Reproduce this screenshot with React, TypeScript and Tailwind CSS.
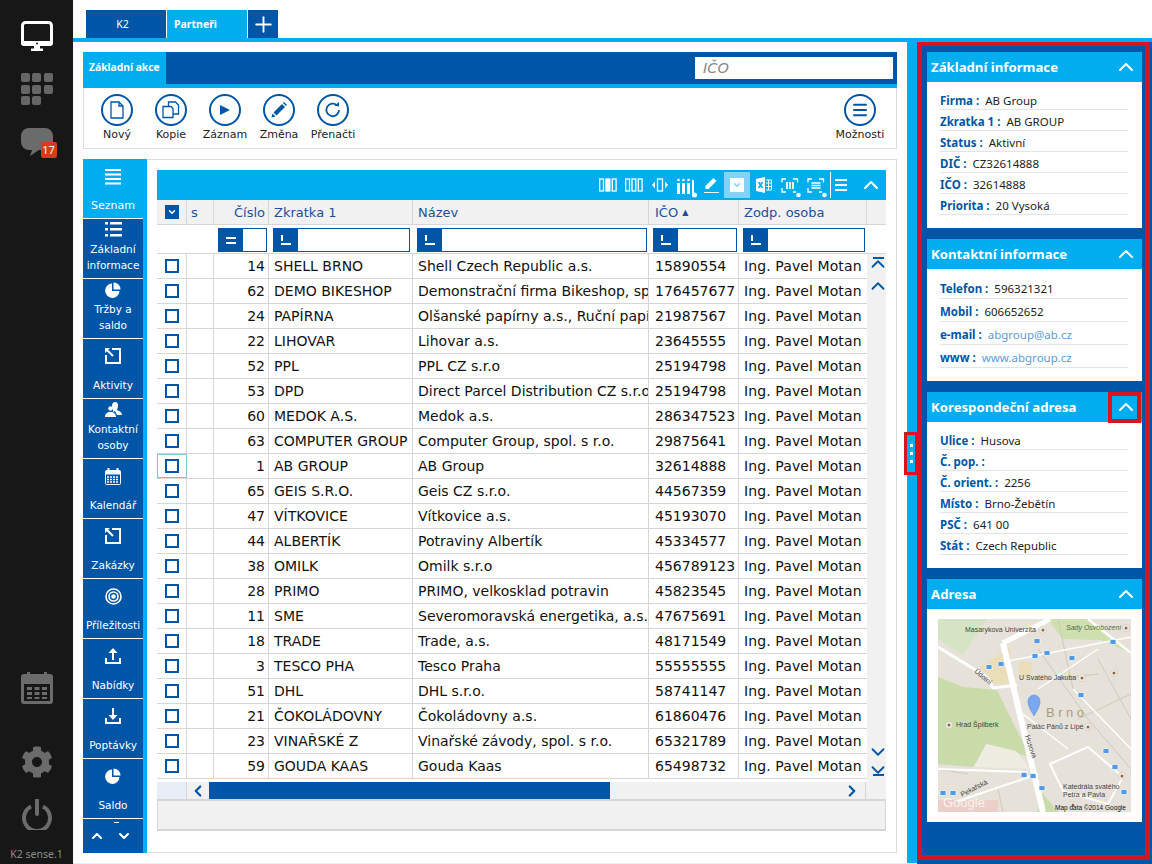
// K2 sense partner list with the detail panel on the right
import React from 'react';
import { Plus, ChevronUp, ChevronDown, ChevronLeft, ChevronRight, Menu } from 'lucide-react';
import { FaCog } from 'react-icons/fa';

const rows = [
  ['14', 'SHELL BRNO', 'Shell Czech Republic a.s.', '15890554'],
  ['62', 'DEMO BIKESHOP', 'Demonstrační firma Bikeshop, spol. s r.o.', '176457677'],
  ['24', 'PAPÍRNA', 'Olšanské papírny a.s., Ruční papírna', '21987567'],
  ['22', 'LIHOVAR', 'Lihovar a.s.', '23645555'],
  ['52', 'PPL', 'PPL CZ s.r.o', '25194798'],
  ['53', 'DPD', 'Direct Parcel Distribution CZ s.r.o.', '25194798'],
  ['60', 'MEDOK A.S.', 'Medok a.s.', '286347523'],
  ['63', 'COMPUTER GROUP', 'Computer Group, spol. s r.o.', '29875641'],
  ['1', 'AB GROUP', 'AB Group', '32614888'],
  ['65', 'GEIS S.R.O.', 'Geis CZ s.r.o.', '44567359'],
  ['47', 'VÍTKOVICE', 'Vítkovice a.s.', '45193070'],
  ['44', 'ALBERTÍK', 'Potraviny Albertík', '45334577'],
  ['38', 'OMILK', 'Omilk s.r.o', '456789123'],
  ['28', 'PRIMO', 'PRIMO, velkosklad potravin', '45823545'],
  ['11', 'SME', 'Severomoravská energetika, a.s.', '47675691'],
  ['18', 'TRADE', 'Trade, a.s.', '48171549'],
  ['3', 'TESCO PHA', 'Tesco Praha', '55555555'],
  ['51', 'DHL', 'DHL s.r.o.', '58741147'],
  ['21', 'ČOKOLÁDOVNY', 'Čokoládovny a.s.', '61860476'],
  ['23', 'VINAŘSKÉ Z', 'Vinařské závody, spol. s r.o.', '65321789'],
  ['59', 'GOUDA KAAS', 'Gouda Kaas', '65498732'],
];

const PieIcon = () => (
  <svg width="16" height="16" viewBox="0 0 16 16" fill="white">
    <path d="M7 1.500v7.500h7.500a7.200 7.200 0 1 1-7.500-7.500z" />
    <path d="M8.500 0.500a7 7 0 0 1 7 7h-7z" />
  </svg>
);

const ExitIcon = () => (
  <svg width="16" height="16" viewBox="0 0 16 16" fill="none" stroke="white" strokeWidth="2">
    <path d="M1 7V15H15V1H7" />
    <path d="M2 2l6 6" />
    <path d="M0 0h5L0 5z" fill="white" stroke="none" />
  </svg>
);

const ListIcon = () => (
  <svg width="17" height="15" viewBox="0 0 17 15" fill="white">
    <rect x="0" y="0" width="3" height="2.500" /><rect x="5" y="0" width="12" height="2.500" />
    <rect x="0" y="6" width="3" height="2.500" /><rect x="5" y="6" width="12" height="2.500" />
    <rect x="0" y="12" width="3" height="2.500" /><rect x="5" y="12" width="12" height="2.500" />
  </svg>
);

const LinesIcon = () => (
  <svg width="16" height="16" viewBox="0 0 16 16" fill="white">
    <rect y="0" width="16" height="2" /><rect y="4.500" width="16" height="2" />
    <rect y="9" width="16" height="2" /><rect y="13.500" width="16" height="2" />
  </svg>
);

const PeopleIcon = () => (
  <svg width="17" height="15" viewBox="0 0 17 15" fill="white">
    <path d="M10 0c2 0 3 1.500 3 3.500S12 7 12 8c2 1 5 2 5 5h-5l-2-4-2 1c0-2 0-2-.5-3S7 5 7 3.500 8 0 10 0z" />
    <circle cx="5.500" cy="6.500" r="2.200" />
    <path d="M0 15c0-3 2-5 5.500-5s5.500 2 5.500 5z" />
  </svg>
);

const CalendarSmall = () => (
  <svg width="16" height="17" viewBox="0 0 16 17" fill="none" stroke="white">
    <rect x="0.500" y="2.500" width="15" height="14" rx="1" />
    <path d="M3.500 0v3M12.500 0v3" strokeWidth="2" />
    <path d="M1 3h14v3H1z" fill="white" />
    <path d="M2 9h12M2 11.500h12M2 14h12" strokeWidth="1.500" strokeDasharray="2 1" />
  </svg>
);

const TargetIcon = () => (
  <svg width="17" height="17" viewBox="0 0 17 17" fill="none" stroke="white" strokeWidth="1.600">
    <circle cx="8.500" cy="8.500" r="7.500" />
    <circle cx="8.500" cy="8.500" r="4.500" />
    <circle cx="8.500" cy="8.500" r="1.500" fill="white" />
  </svg>
);

const UploadIcon = () => (
  <svg width="16" height="16" viewBox="0 0 16 16" fill="none" stroke="white" strokeWidth="2">
    <path d="M1 10v5h14v-5" />
    <path d="M8 12V3" />
    <path d="M3.500 5L8 0l4.500 5z" fill="white" stroke="none" />
  </svg>
);

const DownloadIcon = () => (
  <svg width="16" height="16" viewBox="0 0 16 16" fill="none" stroke="white" strokeWidth="2">
    <path d="M1 10v5h14v-5" />
    <path d="M8 0v8" />
    <path d="M3.500 7L8 12l4.500-5z" fill="white" stroke="none" />
  </svg>
);

const navItems: { label: React.ReactNode; icon: React.ReactNode; two?: boolean }[] = [
  { label: <>Základní<br />informace</>, icon: <ListIcon />, two: true },
  { label: <>Tržby a<br />saldo</>, icon: <PieIcon />, two: true },
  { label: 'Aktivity', icon: <ExitIcon /> },
  { label: <>Kontaktní<br />osoby</>, icon: <PeopleIcon />, two: true },
  { label: 'Kalendář', icon: <CalendarSmall /> },
  { label: 'Zakázky', icon: <ExitIcon /> },
  { label: 'Příležitosti', icon: <TargetIcon /> },
  { label: 'Nabídky', icon: <UploadIcon /> },
  { label: 'Poptávky', icon: <DownloadIcon /> },
  { label: 'Saldo', icon: <PieIcon /> },
];

const actionIcons = {
  file: (
    <svg width="14" height="18" viewBox="0 0 14 18" fill="none" stroke="#0056a6" strokeWidth="1.300">
      <path d="M1 1h8l4 4v12H1z" />
      <path d="M9 1v4h4" />
    </svg>
  ),
  copy: (
    <svg width="18" height="18" viewBox="0 0 18 18" fill="#fff" stroke="#0056a6" strokeWidth="1.300">
      <path d="M6.500 1h7l3 3v9h-10z" />
      <path d="M1 5.500h8l2 2v9H1z" />
    </svg>
  ),
  play: (
    <svg width="12" height="12" viewBox="0 0 12 12" fill="#0056a6">
      <path d="M1 1l10 5-10 5z" />
    </svg>
  ),
  pencil: (
    <svg width="16" height="16" viewBox="0 0 16 16" fill="#0056a6">
      <path d="M11 2l3 3-8.500 8.500-3-3z" />
      <path d="M12 1l1-1 3 3-1 1z" />
      <path d="M1.500 11.500l3 3-4 1z" />
    </svg>
  ),
  refresh: (
    <svg width="18" height="18" viewBox="0 0 18 18" fill="none" stroke="#0056a6" strokeWidth="1.800">
      <path d="M15 9a6.300 6.300 0 1 1-2-4.700" />
      <path d="M10.500 4.800L15 5.500V1z" fill="#0056a6" stroke="none" />
    </svg>
  ),
};

const actions = [
  { label: 'Nový', icon: actionIcons.file },
  { label: 'Kopie', icon: actionIcons.copy },
  { label: 'Záznam', icon: actionIcons.play },
  { label: 'Změna', icon: actionIcons.pencil },
  { label: 'Přenačti', icon: actionIcons.refresh },
];

const ColumnBars = ({ solid }: { solid: number[] }) => (
  <svg width="18" height="14" viewBox="0 0 18 14" fill="none" stroke="white" strokeWidth="1.300" className="shrink-0">
    {[0.700, 7, 13.300].map((x, i) => (
      <rect key={x} x={x} y="1" width="3.800" height="12" fill={solid.includes(i) ? 'white' : 'none'} />
    ))}
  </svg>
);

const MoveColumn = () => (
  <svg width="16" height="14" viewBox="0 0 16 14" fill="white" className="shrink-0">
    <path d="M0 7l3-3.500v7z" />
    <path d="M16 7l-3-3.500v7z" />
    <rect x="5.500" y="1" width="5" height="12" fill="none" stroke="white" strokeWidth="1.300" />
  </svg>
);

const ColumnsDots = () => (
  <svg width="21" height="20" viewBox="0 0 21 20" fill="white" className="shrink-0">
    <circle cx="1.500" cy="2" r="1.300" /><rect x="0" y="5" width="3" height="11" />
    <circle cx="6.500" cy="2" r="1.300" /><rect x="5" y="5" width="3" height="11" />
    <circle cx="11.500" cy="2" r="1.300" /><rect x="10" y="5" width="3" height="11" />
    <rect x="15" y="2" width="2" height="14" />
    <circle cx="17.500" cy="17" r="2.500" />
  </svg>
);

const PencilLine = () => (
  <svg width="16" height="16" viewBox="0 0 16 16" fill="white" className="shrink-0">
    <path d="M10.500 1l3 3-8 8H2.500V9z" />
    <path d="M1 15h15v1.500H1z" />
  </svg>
);

const ExcelIcon = () => (
  <svg width="16" height="16" viewBox="0 0 16 16" fill="none" className="shrink-0">
    <path d="M0 2l9-2v16l-9-2z" fill="white" />
    <path d="M2.500 5l4 6M6.500 5l-4 6" stroke="#00aeef" strokeWidth="1.500" />
    <path d="M10 3h5.500v10H10M10 6h5M10 9.500h5M12.500 3v10" stroke="white" />
  </svg>
);

const FrameDot = ({ dashed }: { dashed?: boolean }) => (
  <svg width="20" height="20" viewBox="0 0 20 20" fill="none" stroke="white" strokeWidth="1.300" className="shrink-0">
    <path d="M1 4.500V1h4M12 1h4.500v3.500M1 10v4h4M12 14h3" />
    {dashed ? (
      <path d="M4.500 5h9M4.500 7.500h9M4.500 10h9" strokeWidth="1.700" />
    ) : (
      <path d="M6 4v7M9 4v7M12 4v7" strokeWidth="1.800" />
    )}
    <circle cx="17.500" cy="17" r="2.300" fill="white" stroke="none" />
  </svg>
);

const FilterInput = ({ w, eq }: { w: string; eq?: boolean }) => (
  <div className={`${w} h-[24px] border border-[#0056a6] bg-white flex`}>
    <div className="w-[24px] h-full bg-[#0056a6] flex items-center justify-center">
      {eq ? (
        <div className="w-[10px] h-[7px] border-y-2 border-white" />
      ) : (
        <div className="w-[10px] h-[10px] border-b-2 border-white relative">
          <div className="absolute left-0 top-0 w-[2px] h-[6px] bg-white" />
        </div>
      )}
    </div>
  </div>
);

const Card = ({ title, boxed, children }: { title: string; boxed?: boolean; children: React.ReactNode }) => (
  <div className="bg-white shrink-0">
    <div className="h-[30px] bg-[#00aeef] flex items-center justify-between text-white relative">
      <span className="pl-[4px] pt-[1px] text-[13.200px] font-bold" style={{ fontFamily: "'Noto Sans', sans-serif" }}>{title}</span>
      <div className="w-[30px] h-[30px] mr-[1px] flex items-center justify-center">
        <ChevronUp size={24} strokeWidth={2} />
      </div>
      {boxed && <div className="absolute right-[1px] top-0 w-[33px] h-[31px] border-[4px] border-[#d9141e]" />}
    </div>
    {children}
  </div>
);

const Info = ({ k, v, href, tall }: { k: string; v?: string; href?: boolean; tall?: boolean }) => (
  <div
    className={`${tall ? 'h-[23px]' : 'h-[21px]'} ml-[13px] mr-[14px] pt-[3px] border-b border-[#e4e4e4] flex items-center text-[11.500px] leading-none gap-[6px] whitespace-nowrap`}
    style={{ fontFamily: "'Noto Sans', sans-serif" }}
  >
    <span className="font-bold text-[#0056a6]">{k} :</span>
    <span className={href ? 'text-[#5b9bd5]' : 'text-[#222]'}>{v}</span>
  </div>
);

const MapPicture = () => (
  <svg width="193" height="193" viewBox="0 0 193 193" className="block">
    <rect width="193" height="193" fill="#e6e2d9" />
    <path d="M0 58L25 68 59 71 92 138 50 125 35 148 0 145z" fill="#c8dba8" />
    <path d="M0 0H49L25 36 0 20z" fill="#d6e4c6" />
    <path d="M109 0H152L193 34 162 21 125 20z" fill="#cfe0b0" />
    <path d="M42 48L72 28 72 66 55 64z" fill="#e9deb8" />
    <path d="M80 43H94V58L82 59z" fill="#e9deb8" />
    <path d="M36 148L48 125 78 132 92 150z" fill="#efece2" />
    <path d="M0 181H60V193H0z" fill="#eccfc8" />
    <path d="M102 171L120 193H100z" fill="#c9dca9" />
    <g fill="none" stroke="#cfc9bc">
      <path d="M100 30L150 100 193 150M120 0L135 70M160 40L193 100M60 170L65 193M0 150L30 155M110 60L160 55M140 100L193 75" />
    </g>
    <g fill="none" stroke="#fff">
      <path d="M0 28L49 58 55 69 79 66" strokeWidth="3" />
      <path d="M65 24L105 193" strokeWidth="6" />
      <path d="M65 24L112 0" strokeWidth="5" />
      <path d="M70 42L193 18" strokeWidth="1.500" />
      <path d="M150 0L193 34" strokeWidth="2.500" />
      <path d="M0 150L90 153" strokeWidth="2" />
      <path d="M20 182L100 155" strokeWidth="2" />
      <path d="M112 145L150 128 185 158 170 185 125 172z" strokeWidth="2" />
      <path d="M85 95L130 130M100 70L160 30M135 70L193 130" strokeWidth="1.500" />
    </g>
    <g fill="#4f9be8" stroke="#fff" strokeWidth="0.700">
      {[[99, 22], [175, 23], [97, 37], [109, 34], [134, 39], [51, 48], [63, 45], [143, 76], [168, 132], [177, 148], [186, 173], [86, 156], [95, 157], [104, 169], [5, 174], [15, 174]].map(([x, y]) => (
        <rect key={`${x}-${y}`} x={x - 3} y={y - 2.500} width="6" height="5" rx="1" />
      ))}
    </g>
    <g fill="#f4efe3" stroke="#bbb" strokeWidth="0.500">
      {[[105, 11], [188, 9], [176, 54], [144, 59], [11, 106], [150, 108], [184, 157], [135, 186]].map(([x, y]) => (
        <g key={`${x}-${y}`}>
          <circle cx={x} cy={y} r="3.500" />
          <circle cx={x} cy={y} r="1.500" fill="#94663f" stroke="none" />
        </g>
      ))}
    </g>
    <path d="M96 97C92 90 90 87 90 82a6 6 0 0 1 12 0C102 87 100 90 96 97z" fill="#7aa7f0" stroke="#5583d0" strokeWidth="0.500" />
    <g fontFamily="'Liberation Sans', sans-serif" fontSize="7" fill="#444">
      <text x="27" y="13">Masarykova Univerzita</text>
      <text x="128" y="11" fontStyle="italic" fill="#566b48">Sady Osvobození</text>
      <text x="81" y="61">U Svatého Jakuba</text>
      <text x="18" y="108">Hrad Špilberk</text>
      <text x="89" y="110">Palác Pánů z Lipé</text>
      <text x="125" y="170">Katedrála svatého</text>
      <text x="125" y="178">Petra a Pavla</text>
      <text x="36" y="53" transform="rotate(40 36 53)">Údolní</text>
      <text x="87" y="117" transform="rotate(72 87 117)">Husova</text>
      <text x="24" y="178" transform="rotate(-27 24 178)">Pekařská</text>
      <text x="117" y="191" fontSize="6.500" fill="#111">Map data ©2014 Google</text>
    </g>
    <text x="108" y="98" fontFamily="'Liberation Sans', sans-serif" fontSize="13" letterSpacing="3.500" fill="#a99d7c">Brno</text>
    <text x="5" y="188" fontFamily="'Liberation Sans', sans-serif" fontSize="13" fill="#fff" fillOpacity="0.750">Google</text>
  </svg>
);

export default function App() {
  return (
    <div
      className="w-[1152px] h-[864px] flex overflow-hidden bg-white"
      style={{ fontFamily: "'DejaVu Sans', sans-serif" }}
    >
      {/* dark rail */}
      <div className="w-[73px] h-full bg-[#171717] flex flex-col items-center text-[#6b6b6b]">
        <svg width="32" height="30" viewBox="0 0 32 30" className="mt-[21px] shrink-0">
          <rect x="1.500" y="1.500" width="29" height="22" rx="3" fill="#171717" stroke="white" strokeWidth="3" />
          <path d="M0 20h32v2a3 3 0 0 1-3 3H3a3 3 0 0 1-3-3z" fill="white" />
          <circle cx="16" cy="22.500" r="1" fill="#171717" />
          <path d="M13 25h6v2.500h3V30H10v-2.500h3z" fill="white" />
        </svg>
        <div className="grid grid-cols-[repeat(3,9px)] gap-[2.500px] mt-[22px] w-[32px]">
          {Array.from({ length: 8 }).map((_, i) => (
            <div key={i} className="w-[9px] h-[9px] rounded-[2px] bg-[#666]" />
          ))}
        </div>
        <div className="relative mt-[23px] w-[32px] h-[28px]">
          <svg width="32" height="28" viewBox="0 0 32 28" fill="#6b6b6b">
            <path d="M8 0h16a8 8 0 0 1 8 8v6a8 8 0 0 1-8 8H18l-9 6 2-6H8a8 8 0 0 1-8-8V8a8 8 0 0 1 8-8z" />
          </svg>
          <div className="absolute left-[20px] top-[14px] w-[16px] h-[16px] rounded-[2px] bg-[#d93a1a] text-white text-[11px] leading-[16px] text-center" style={{ fontFamily: "'Noto Sans', sans-serif" }}>
            17
          </div>
        </div>
        <div className="flex-1" />
        <svg width="32" height="32" viewBox="0 0 32 32" fill="#6b6b6b" className="shrink-0">
          <path fillRule="evenodd" d="M3 2h3V0h3v2h14V0h3v2h3a3 3 0 0 1 3 3v24a3 3 0 0 1-3 3H3a3 3 0 0 1-3-3V5a3 3 0 0 1 3-3zM3 12v17h26V12z" />
          <path d="M6 15h5v3H6zM13.500 15h5v3h-5zM21 15h5v3h-5zM6 20h5v3H6zM13.500 20h5v3h-5zM21 20h5v3h-5zM6 25h5v2H6zM13.500 25h5v2h-5zM21 25h5v2h-5z" />
        </svg>
        <FaCog size={32} className="mt-[42px] shrink-0" />
        <svg width="30" height="31" viewBox="0 0 30 31" fill="none" stroke="#6b6b6b" strokeWidth="4" className="mt-[21px] shrink-0">
          <path d="M9 7.500a13 13 0 1 0 12 0" />
          <path d="M15 0v15" strokeLinecap="round" />
        </svg>
        <div className="text-[10.500px] leading-[14px] mt-[17px] mb-[3px] whitespace-nowrap text-[#8a8a8a]" style={{ fontFamily: "'Noto Sans', sans-serif" }}>K2 sense.1</div>
      </div>

      <div className="flex-1 flex flex-col min-w-0">
        {/* tabs */}
        <div className="h-[38px] pt-[10px] pl-[13px] flex gap-[1px] text-white text-[10.500px] shrink-0" style={{ fontFamily: "'Noto Sans', sans-serif" }}>
          <div className="w-[80px] bg-[#0056a6] flex items-center justify-center pr-[7px] pt-[2px]">K2</div>
          <div className="w-[80px] bg-[#00aeef] flex items-center pl-[7px] pt-[2px] font-bold">Partneři</div>
          <div className="w-[30px] bg-[#0056a6] flex items-center justify-center">
            <Plus size={25} strokeWidth={1.800} />
          </div>
        </div>
        <div className="h-[4px] bg-[#00aeef] shrink-0" />

        <div className="flex-1 flex min-h-0">
          {/* main part */}
          <div className="w-[834px] pt-[10px] px-[10px] pb-[10px] flex flex-col border-b border-[#eeeeee]">
            <div className="h-[32px] bg-[#0056a6] flex items-center justify-between shrink-0">
              <div className="w-[83px] h-full bg-[#00aeef] text-white text-[10.300px] font-bold flex items-center pl-[6px] whitespace-nowrap" style={{ fontFamily: "'Noto Sans', sans-serif" }}>
                Základní akce
              </div>
              <div className="w-[198px] h-[22px] bg-white mr-[4px] pl-[8px] text-[14.500px] italic text-[#888] leading-[22px]">
                IČO
              </div>
            </div>
            <div className="h-[4px] bg-[#00aeef] shrink-0" />
            <div className="h-[61px] border-x border-b border-[#ddd] flex justify-between pl-[6px] pr-[9px] pt-[6px] shrink-0">
              <div className="flex">
                {actions.map((a) => (
                  <div key={a.label} className="w-[54px] flex flex-col items-center">
                    <div className="w-[32px] h-[32px] rounded-full border-2 border-[#0056a6] flex items-center justify-center">
                      {a.icon}
                    </div>
                    <div className="text-[11px] mt-[1px] text-[#222] whitespace-nowrap">{a.label}</div>
                  </div>
                ))}
              </div>
              <div className="w-[54px] flex flex-col items-center">
                <div className="w-[32px] h-[32px] rounded-full border-2 border-[#0056a6] text-[#0056a6] flex items-center justify-center">
                  <Menu size={18} strokeWidth={2.600} />
                </div>
                <div className="text-[11px] mt-[1px] text-[#222]">Možnosti</div>
              </div>
            </div>

            {/* lower box */}
            <div className="mt-[10px] flex-1 flex min-h-0">
              <div className="w-[60px] flex flex-col shrink-0">
                <div className="h-[59px] bg-[#00aeef] flex flex-col items-center text-white text-[11px] pt-[10px]">
                  <LinesIcon />
                  <div className="mt-[13px]">Seznam</div>
                </div>
                {navItems.map((n, i) => (
                  <div
                    key={i}
                    className={`h-[60px] bg-[#0056a6] border-t border-white flex flex-col items-center text-white text-[10.500px] leading-[16px] text-center whitespace-nowrap ${n.two ? 'pt-[3px]' : 'pt-[9px]'}`}
                  >
                    <div className="h-[17px]">{n.icon}</div>
                    <div className={n.two ? 'mt-[2px]' : 'mt-[12px]'}>{n.label}</div>
                  </div>
                ))}
                <div className="flex-1 bg-[#0056a6] border-t border-white flex items-center justify-around text-white pr-[6px] relative">
                  <div className="absolute left-[31px] top-[3px] w-[5px] h-[1px] bg-white" />
                  <ChevronUp size={16} strokeWidth={3} />
                  <ChevronDown size={16} strokeWidth={3} />
                </div>
              </div>
              <div className="w-[4px] bg-[#00aeef] shrink-0" />

              {/* table */}
              <div className="flex-1 border-t border-r border-b border-[#ddd] min-w-0">
                <div className="w-[729px] ml-[10px] mt-[10px] flex flex-col text-[13px]">
                  <div className="h-[30px] bg-[#00aeef] flex items-center justify-end pr-[3px] text-white">
                    <ColumnBars solid={[1]} />
                    <div className="ml-[8px]"><ColumnBars solid={[]} /></div>
                    <div className="ml-[9px]"><MoveColumn /></div>
                    <div className="ml-[9px] mt-[5px]"><ColumnsDots /></div>
                    <div className="ml-[5px]"><PencilLine /></div>
                    <div className="ml-[5px] w-[26px] h-[26px] bg-[#7fd5f7] flex items-center justify-center shrink-0">
                      <div className="w-[14px] h-[14px] bg-white flex items-center justify-center">
                        <ChevronDown size={10} strokeWidth={3.500} className="text-[#7fd5f7]" />
                      </div>
                    </div>
                    <div className="ml-[6px]"><ExcelIcon /></div>
                    <div className="ml-[9px] mt-[5px]"><FrameDot /></div>
                    <div className="ml-[6px] mt-[5px]"><FrameDot dashed /></div>
                    <div className="ml-[3px] w-[1px] h-[26px] bg-white shrink-0" />
                    <div className="ml-[4px] w-[12px] h-[12px] flex flex-col justify-between shrink-0">
                      <div className="h-[2px] bg-white" />
                      <div className="h-[2px] bg-white" />
                      <div className="h-[2px] bg-white" />
                    </div>
                    <ChevronUp size={24} strokeWidth={2} className="ml-[12px] shrink-0" />
                  </div>

                  <div className="h-[25px] flex bg-[#f1f1f1] text-[#1c4f9c] border-b border-[#d6d6d6] leading-[26px]">
                    <div className="w-[30px] border-r border-[#d6d6d6] flex items-center justify-center">
                      <div className="w-[14px] h-[14px] bg-[#0056a6] flex items-center justify-center">
                        <ChevronDown size={10} strokeWidth={3.500} className="text-white" />
                      </div>
                    </div>
                    <div className="w-[27px] border-r border-[#d6d6d6] pl-[4px]">s</div>
                    <div className="w-[55px] border-r border-[#d6d6d6] text-right pr-[3px]">Číslo</div>
                    <div className="w-[144px] border-r border-[#d6d6d6] pl-[5px]">Zkratka 1</div>
                    <div className="w-[236px] border-r border-[#d6d6d6] pl-[5px]">Název</div>
                    <div className="w-[90px] border-r border-[#d6d6d6] pl-[6px]">IČO <span className="text-[8px] align-[2px]">▲</span></div>
                    <div className="w-[128px] border-r border-[#d6d6d6] pl-[5px] whitespace-nowrap">Zodp. osoba</div>
                    <div className="flex-1" />
                  </div>

                  <div className="h-[29px] flex items-start pt-[3px] border-b border-[#d6d6d6]">
                    <div className="w-[57px] h-full" />
                    <div className="w-[55px] flex justify-center pl-[1px]"><FilterInput w="w-[49px]" eq /></div>
                    <div className="w-[144px] flex justify-center"><FilterInput w="w-[137px]" /></div>
                    <div className="w-[236px] flex justify-center pl-[1px]"><FilterInput w="w-[230px]" /></div>
                    <div className="w-[90px] flex justify-center pl-[1px]"><FilterInput w="w-[84px]" /></div>
                    <div className="w-[128px] flex justify-center pl-[1px]"><FilterInput w="w-[122px]" /></div>
                  </div>

                  <div className="flex h-[528px] overflow-hidden">
                    <div className="w-[710px] shrink-0">
                      {rows.map((r) => (
                        <div key={r[0]} className="h-[25px] flex border-b border-[#d6d6d6] text-[14px] text-[#111] leading-[25px] whitespace-nowrap">
                          <div className={`w-[30px] border-r border-[#d6d6d6] flex items-center justify-center ${r[0] === '1' ? 'outline outline-1 -outline-offset-1 outline-[#7fc4d0]' : ''}`}>
                            <div className="w-[14px] h-[14px] border-[2.500px] border-[#0056a6]" />
                          </div>
                          <div className="w-[27px] border-r border-[#d6d6d6]" />
                          <div className="w-[55px] border-r border-[#d6d6d6] text-right pr-[3px]">{r[0]}</div>
                          <div className="w-[144px] border-r border-[#d6d6d6] pl-[5px] overflow-hidden">{r[1]}</div>
                          <div className="w-[236px] border-r border-[#d6d6d6] pl-[5px] overflow-hidden">{r[2]}</div>
                          <div className="w-[90px] border-r border-[#d6d6d6] pl-[6px] overflow-hidden">{r[3]}</div>
                          <div className="w-[128px] pl-[5px] overflow-hidden tracking-[0.100px]">Ing. Pavel Motan</div>
                        </div>
                      ))}
                    </div>
                    <div className="flex-1 bg-[#f1f1f1] flex flex-col items-center text-[#0056a6]">
                      <div className="w-[11px] h-[2px] bg-[#0056a6] mt-[3px] shrink-0" />
                      <ChevronUp size={22} strokeWidth={2} className="-mt-[6px] shrink-0" />
                      <ChevronUp size={22} strokeWidth={2} className="shrink-0" />
                      <div className="flex-1" />
                      <ChevronDown size={22} strokeWidth={2} className="shrink-0" />
                      <ChevronDown size={22} strokeWidth={2} className="-mt-[4px] shrink-0" />
                      <div className="w-[11px] h-[2px] bg-[#0056a6] -mt-[7px] mb-[6px] shrink-0" />
                    </div>
                  </div>

                  <div className="h-[19px] flex bg-[#f1f1f1] border-b-2 border-[#d6d6d6] text-[#0056a6]">
                    <div className="w-[30px] bg-[#e9edf5] border-r border-[#d6d6d6]" />
                    <div className="w-[22px] flex items-center justify-center">
                      <ChevronLeft size={18} strokeWidth={3} />
                    </div>
                    <div className="w-[401px] bg-[#0056a6]" />
                    <div className="w-[256px] flex items-center justify-end pr-[4px] border-r border-[#d6d6d6]">
                      <ChevronRight size={18} strokeWidth={3} />
                    </div>
                  </div>
                  <div className="h-[30px] bg-[#f1f1f1] border-b-2 border-r border-l border-[#d6d6d6]" />
                </div>
              </div>
            </div>
          </div>

          {/* right panel */}
          <div className="flex-1 flex relative min-w-0">
            <div className="w-[10px] bg-[#00aeef] mb-[1px] shrink-0" />
            <div className="absolute -left-[3px] top-[390px] w-[14px] h-[43px] border-[3px] border-[#d9141e] bg-[#00aeef] flex flex-col items-center justify-center gap-[5px]">
              <div className="w-[3px] h-[3px] bg-white" />
              <div className="w-[3px] h-[3px] bg-white" />
              <div className="w-[3px] h-[3px] bg-white" />
            </div>
            <div className="flex-1 bg-[#0056a6] pr-[2px] pb-[4px] flex min-w-0">
              <div className="flex-1 border-[5px] border-t-[4px] border-[#d9141e] pl-[5px] pr-[3px] pt-[6px] flex flex-col gap-[11px] text-[#111] min-w-0">
                <Card title="Základní informace">
                  <div className="pt-[7px] pb-[13px]">
                    <Info k="Firma" v="AB Group" />
                    <Info k="Zkratka 1" v="AB GROUP" />
                    <Info k="Status" v="Aktivní" />
                    <Info k="DIČ" v="CZ32614888" />
                    <Info k="IČO" v="32614888" />
                    <Info k="Priorita" v="20 Vysoká" />
                  </div>
                </Card>
                <Card title="Kontaktní informace">
                  <div className="pt-[7px] pb-[13px]">
                    <Info tall k="Telefon" v="596321321" />
                    <Info tall k="Mobil" v="606652652" />
                    <Info tall k="e-mail" v="abgroup@ab.cz" href />
                    <Info tall k="www" v="www.abgroup.cz" href />
                  </div>
                </Card>
                <Card title="Korespondeční adresa" boxed>
                  <div className="pt-[7px] pb-[13px]">
                    <Info k="Ulice" v="Husova" />
                    <Info k="Č. pop." />
                    <Info k="Č. orient." v="2256" />
                    <Info k="Místo" v="Brno-Žebětín" />
                    <Info k="PSČ" v="641 00" />
                    <Info k="Stát" v="Czech Republic" />
                  </div>
                </Card>
                <Card title="Adresa">
                  <div className="pl-[11px] pt-[10px] pb-[10px]">
                    <MapPicture />
                  </div>
                </Card>
              </div>
            </div>
          </div>
        </div>
      </div>
    </div>
  );
}
